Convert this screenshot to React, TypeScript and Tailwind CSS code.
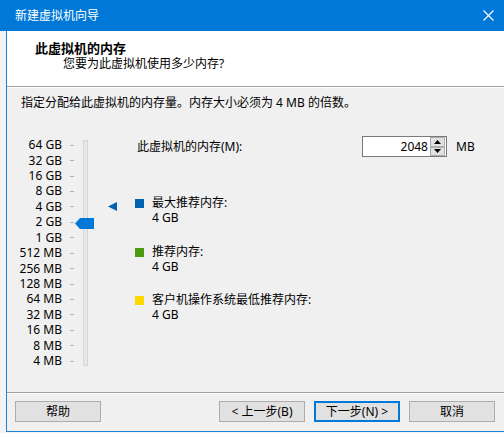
import React from 'react';

const SCALE = ['64 GB', '32 GB', '16 GB', '8 GB', '4 GB', '2 GB', '1 GB', '512 MB', '256 MB', '128 MB', '64 MB', '32 MB', '16 MB', '8 MB', '4 MB'];

const LEGEND = [
  { color: 'bg-[#0063b1]', label: '最大推荐内存:', value: '4 GB', gap: 'mt-[39px]' },
  { color: 'bg-[#4c9a0f]', label: '推荐内存:', value: '4 GB', gap: 'mt-[20px]' },
  { color: 'bg-[#ffd800]', label: '客户机操作系统最低推荐内存:', value: '4 GB', gap: 'mt-[19px]' },
];

function Button({ children, primary }: { children: React.ReactNode; primary?: boolean }) {
  return (
    <button
      type="button"
      className={`w-[86px] h-[21px] flex items-center justify-center bg-[#e1e1e1] text-[12px] leading-none text-black ${
        primary ? 'border-2 border-[#0078d7]' : 'border border-[#adadad]'
      }`}
    >
      {children}
    </button>
  );
}

function SpinButton({ up }: { up?: boolean }) {
  return (
    <div className="h-[9.5px] w-[15px] bg-[#e1e1e1] border border-[#adadad] flex items-center justify-center">
      <svg width="7" height="4" viewBox="0 0 7 4">
        <polygon points={up ? '0,4 3.5,0 7,4' : '0,0 3.5,4 7,0'} fill="#000" />
      </svg>
    </div>
  );
}

export default function App() {
  return (
    <div
      className="w-[504px] h-[433px] bg-[#f3f3f3] overflow-hidden text-black"
      style={{ fontFamily: '"Noto Sans", "Noto Sans CJK SC", sans-serif' }}
    >
      {/* title bar */}
      <div className="h-[31px] bg-[#0078d7] flex items-center justify-between pl-[15px] pr-[10px]">
        <span className="text-white text-[12px] leading-none">新建虚拟机向导</span>
        <svg width="11" height="11" viewBox="0 0 11 11">
          <path d="M0.5 0.5 L10.5 10.5 M10.5 0.5 L0.5 10.5" stroke="#fff" strokeWidth="1.1" />
        </svg>
      </div>

      <div className="ml-[6px] h-[401px] border-l border-b border-[#1a82d8] flex flex-col">
        {/* header */}
        <div className="h-[56px] bg-white pl-[28px] pt-[10px] border-b border-[#a0a0a0]">
          <div className="text-[13px] leading-[14px] font-bold">此虚拟机的内存</div>
          <div className="text-[12px] leading-[14px] pl-[28px] mt-[2px]">您要为此虚拟机使用多少内存?</div>
        </div>

        {/* body */}
        <div className="h-[306px] bg-[#f0f0f0] border-t border-white border-b border-b-[#a0a0a0] flex flex-col">
          <div className="h-[30px] pl-[14px] flex items-center text-[12px] leading-none">
            指定分配给此虚拟机的内存量。内存大小必须为 4 MB 的倍数。
          </div>

          <div className="flex flex-1">
            {/* slider */}
            <div className="relative w-[128px] flex">
              <div className="mt-[19.5px] flex flex-col">
                {SCALE.map((s) => (
                  <div key={s} className="h-[15.43px] flex items-center">
                    <span className="w-[55px] text-right text-[12px] leading-none">{s}</span>
                    <span className="ml-[8px] w-[4px] h-px bg-[#b4b4b4]" />
                  </div>
                ))}
              </div>
              <div className="ml-[9px] mt-[22px] w-[5px] h-[226px] border border-[#d6d6d6] bg-[#e7e7e7]" />
              <svg className="absolute left-[68px] top-[99.5px]" width="19" height="11" viewBox="0 0 19 11">
                <polygon points="0,5.5 5,0 19,0 19,11 5,11" fill="#0078d7" />
              </svg>
              <svg className="absolute left-[101px] top-[84px]" width="9" height="9" viewBox="0 0 9 9">
                <polygon points="0,4.5 9,0 9,9" fill="#0063b1" />
              </svg>
            </div>

            {/* right content */}
            <div className="flex flex-col">
              <div className="mt-[18px] h-[21px] flex items-center text-[12px]">
                <span className="w-[227px] pl-[2px] leading-none">此虚拟机的内存(M):</span>
                <div className="w-[85px] h-[21px] border border-[#7a7a7a] bg-white flex">
                  <div className="flex-1 flex items-center justify-end pr-[2px] leading-none">2048</div>
                  <div className="flex flex-col justify-center pr-px">
                    <SpinButton up />
                    <SpinButton />
                  </div>
                </div>
                <span className="ml-[9px] leading-none">MB</span>
              </div>

              {LEGEND.map((l) => (
                <div key={l.label} className={`${l.gap} flex`}>
                  <span className={`w-[9px] h-[9px] mt-[3px] ${l.color}`} />
                  <div className="ml-[8px] text-[12px]">
                    <div className="h-[14px] leading-[14px]">{l.label}</div>
                    <div className="h-[14px] leading-[14px] mt-[1px]">{l.value}</div>
                  </div>
                </div>
              ))}
            </div>
          </div>
        </div>

        {/* footer */}
        <div className="flex-1 bg-[#f0f0f0] border-t border-white flex justify-between pl-[8px] pr-[9px] pt-[7px]">
          <Button>帮助</Button>
          <div className="flex gap-[9px]">
            <Button>&lt; 上一步(B)</Button>
            <Button primary>下一步(N) &gt;</Button>
            <Button>取消</Button>
          </div>
        </div>
      </div>
    </div>
  );
}
